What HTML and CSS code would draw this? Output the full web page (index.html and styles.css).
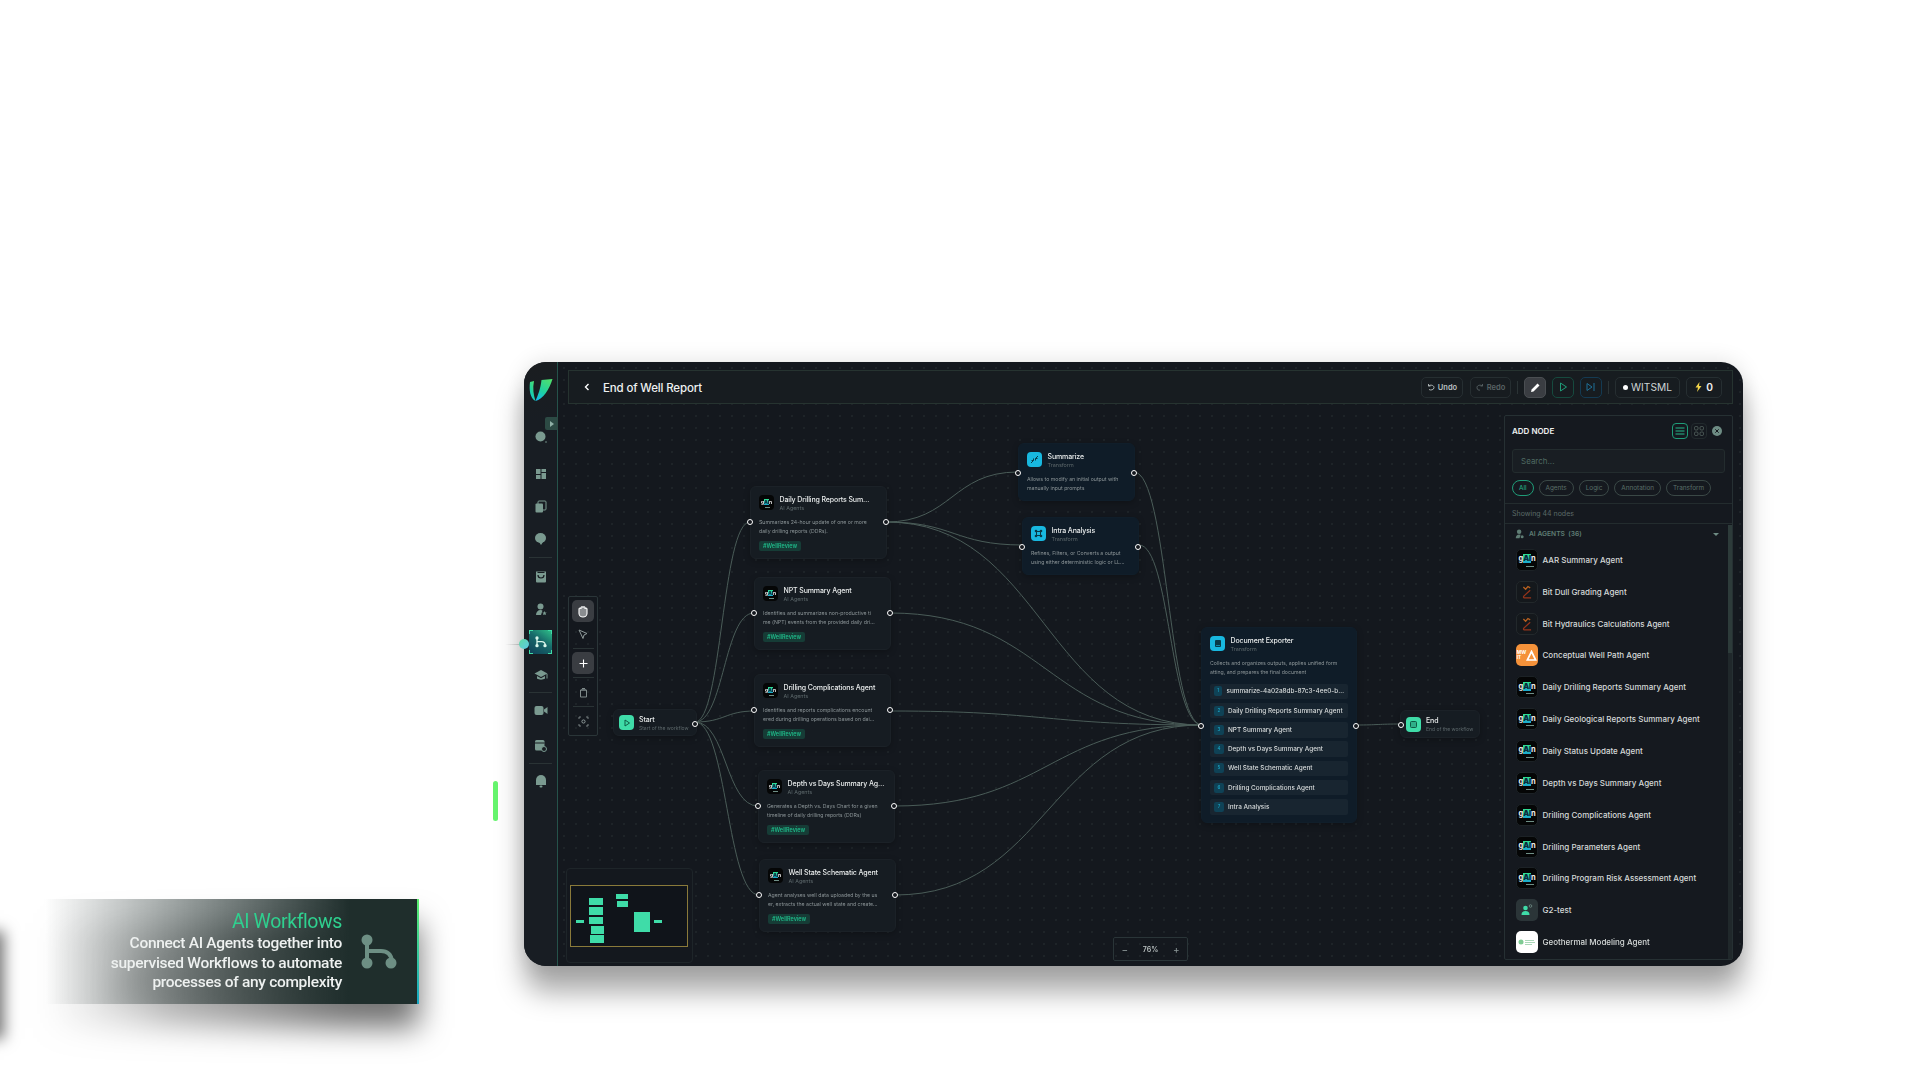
FILE: index.html
```html
<!DOCTYPE html>
<html lang="en">
<head>
  <meta charset="UTF-8" />
  <title>End of Well Report</title>
  <link rel="stylesheet" href="styles.css">
</head>
<body>
  <svg class="defs" width="0" height="0">
    <symbol id="bit" viewBox="0 0 22 22">
      <path d="M7 5.500l2.500 2.500L12 5l2.500 1.500" fill="none" stroke="#b8601f" stroke-width="1.400"/>
      <path d="M14.500 9l-7 6.500c-1 1.500 0 2 1.500 2h6.500" fill="none" stroke="#96341a" stroke-width="1.400"/>
    </symbol>
  </svg>

  <div class="ghost"></div>
  <div class="pulse-bar"></div>
  <div class="pulse-line"></div>

  <div class="callout">
    <div class="callout-text">
      <div class="callout-title">AI Workflows</div>
      <div>Connect AI Agents together into</div>
      <div>supervised Workflows to automate</div>
      <div>processes of any complexity</div>
    </div>
    <svg class="callout-icon" width="36" height="36" viewBox="0 0 36 36">
      <path d="M6 6v24M6 17h14c6 0 10 3 11 10" fill="none" stroke="#6d8f84" stroke-width="4"/>
      <circle cx="6" cy="6" r="5.500" fill="#6d8f84"/><circle cx="6" cy="29" r="5.500" fill="#6d8f84"/><circle cx="30" cy="29" r="5.500" fill="#6d8f84"/>
    </svg>
  </div>

  <div class="window">
    <aside class="sidebar">
      <svg class="logo" width="24" height="26" viewBox="0 0 24 26">
        <defs><linearGradient id="lg" x1="0.8" y1="0" x2="0.25" y2="1"><stop offset="0" stop-color="#4fe06e"/><stop offset="0.6" stop-color="#1fd0a0"/><stop offset="1" stop-color="#14bce8"/></linearGradient></defs>
        <path d="M12.500 3L23.500 2C20.500 12 14 22.500 6.500 24 9 18 11.500 12 12.500 3z" fill="url(#lg)"/>
        <path d="M1 5C0 13 1 21 6.500 24 4.500 18 3.500 11 5 4z" fill="url(#lg)"/>
      </svg>
      <div class="toggle"><span></span></div>
      <nav class="nav">
        <a class="nav-item first"><svg width="14" height="14" viewBox="0 0 14 14"><circle cx="6.500" cy="6.500" r="5" fill="#7a9a90"/><circle cx="12" cy="12" r="0.800" fill="#7a9a90"/></svg></a>
        <a class="nav-item"><svg width="12" height="12" viewBox="0 0 12 12" fill="#7a9a90"><rect x="1" y="1" width="4.500" height="5"/><rect x="6.500" y="1" width="4.500" height="3"/><rect x="1" y="7" width="4.500" height="4"/><rect x="6.500" y="5" width="4.500" height="6"/></svg></a>
        <a class="nav-item"><svg width="13" height="13" viewBox="0 0 13 13"><rect x="4" y="1" width="8" height="9" rx="1" fill="none" stroke="#7a9a90"/><rect x="1.500" y="3.500" width="7.500" height="9" rx="1" fill="#7a9a90"/></svg></a>
        <a class="nav-item"><svg width="13" height="13" viewBox="0 0 13 13" fill="#7a9a90"><ellipse cx="6.500" cy="6" rx="5.500" ry="5"/><path d="M5 10l2 3 2-3z"/></svg></a>
        <div class="nav-sep wide"></div>
        <a class="nav-item"><svg width="12" height="13" viewBox="0 0 12 13"><path d="M1 1.500h10v10a1 1 0 0 1-1 1H2a1 1 0 0 1-1-1z" fill="#7a9a90"/><path d="M3 5c0 4 6 4 6 0" fill="none" stroke="#171c21" stroke-width="1.200"/><rect x="2.500" y="2" width="7" height="1" fill="#171c21"/></svg></a>
        <a class="nav-item"><svg width="12" height="13" viewBox="0 0 12 13" fill="#7a9a90"><circle cx="5.500" cy="3.500" r="3"/><path d="M1 12c0-3 2-5 4.500-5 1 0 1.500.3 2 .6L6 12z"/><path d="M9.500 8l.7 1.400 1.500.2-1.100 1 .3 1.500-1.400-.7-1.400.7.300-1.500-1.100-1 1.500-.2z"/></svg></a>
        <a class="nav-item active">
          <i class="tick tl"></i><i class="tick tr"></i><i class="tick bl"></i><i class="tick br"></i>
          <svg width="12" height="12" viewBox="0 0 36 36"><path d="M6 6v24M6 17h14c6 0 10 3 11 10" fill="none" stroke="#d8f5ea" stroke-width="4"/><circle cx="6" cy="6" r="5" fill="#d8f5ea"/><circle cx="6" cy="29" r="5" fill="#d8f5ea"/><circle cx="30" cy="29" r="5" fill="#d8f5ea"/></svg>
        </a>
        <a class="nav-item"><svg width="14" height="12" viewBox="0 0 14 12" fill="#7a9a90"><path d="M7 1L0.500 4.500 7 8l6.500-3.500z"/><path d="M3 7v2.500c2 1.500 6 1.500 8 0V7L7 9.200z"/><rect x="12.500" y="5" width="1" height="4.500"/></svg></a>
        <div class="nav-sep"></div>
        <a class="nav-item"><svg width="14" height="11" viewBox="0 0 14 11" fill="#7a9a90"><rect x="0.500" y="1" width="9" height="9" rx="2"/><path d="M10 4.500L13.500 2v7L10 6.500z"/></svg></a>
        <a class="nav-item spaced"><svg width="13" height="13" viewBox="0 0 13 13"><rect x="1" y="1" width="9.500" height="10.500" rx="1.500" fill="#7a9a90"/><rect x="1" y="3.500" width="9.500" height="1" fill="#171c21"/><circle cx="10" cy="10" r="2.500" fill="#171c21" stroke="#7a9a90"/></svg></a>
        <div class="nav-sep"></div>
        <a class="nav-item"><svg width="12" height="14" viewBox="0 0 12 14" fill="#7a9a90"><path d="M1 11V6a5 5 0 0 1 10 0v5z"/><rect x="4.500" y="11.500" width="3" height="2" rx="1"/></svg></a>
      </nav>
    </aside>

    <div class="main">
      <header class="topbar">
        <div class="topbar-left">
          <svg width="6" height="8" viewBox="0 0 6 8"><path d="M4.500 1L1.500 4l3 3" fill="none" stroke="#fff" stroke-width="1.400"/></svg>
          <span class="page-title">End of Well Report</span>
        </div>
        <div class="topbar-right">
          <button class="tb-btn undo"><svg width="8" height="8" viewBox="0 0 8 8"><path d="M1.500 1v2h2M1.700 3C3 1.500 7 2 7 4.500S3.500 7.500 2 6.500" fill="none" stroke="#b9c0c0" stroke-width="0.900"/></svg>Undo</button>
          <button class="tb-btn redo"><svg width="8" height="8" viewBox="0 0 8 8"><path d="M6.500 1v2h-2M6.300 3C5 1.500 1 2 1 4.500S3 7.500 4 7" fill="none" stroke="#5a6466" stroke-width="0.900"/></svg>Redo</button>
          <i class="tb-sep"></i>
          <button class="tb-icon pen"><svg width="11" height="11" viewBox="0 0 11 11"><path d="M1 10l.6-2.500L7.500 1.600l2 2L3.500 9.400z" fill="#fff"/></svg></button>
          <button class="tb-icon play"><svg width="9" height="10" viewBox="0 0 9 10"><path d="M1.500 1l6 4-6 4z" fill="none" stroke="#1f9c78" stroke-width="1"/></svg></button>
          <button class="tb-icon step"><svg width="10" height="10" viewBox="0 0 10 10"><path d="M1 1.500l5 3.500-5 3.500zM8 1v8" fill="none" stroke="#1f6f96" stroke-width="1"/></svg></button>
          <i class="tb-sep"></i>
          <div class="tb-pill witsml"><i class="dot"></i>WITSML</div>
          <div class="tb-pill bolt"><svg width="7" height="10" viewBox="0 0 7 10"><path d="M4.500 0L0.500 5.500h2.500L2 10l4.500-6H4z" fill="#f2d44a"/></svg>0</div>
        </div>
      </header>

      <section class="canvas">
        <svg class="edges" width="1186" height="562" viewBox="0 0 1186 562" fill="none">
          <path d="M137 318C164 318 164 118 192 118"/>
          <path d="M137 318C166 318 166 209 196 209"/>
          <path d="M137 318C167 318 167 307 197 307"/>
          <path d="M137 318C168 318 168 402 200 402"/>
          <path d="M137 318C169 318 169 491 201 491"/>
          <path d="M328 118C394 118 394 68 460 68"/>
          <path d="M328 118C396 118 396 141 465 141"/>
          <path d="M328 118C486 118 486 321 644 321"/>
          <path d="M576 68C610 68 610 321 644 321"/>
          <path d="M581 141C612 141 612 321 644 321"/>
          <path d="M332 209C488 209 488 321 644 321"/>
          <path d="M333 307C488 307 488 321 644 321"/>
          <path d="M336 402C490 402 490 321 644 321"/>
          <path d="M337 491C490 491 490 321 644 321"/>
          <path d="M798 321C820 321 820 320 843 320"/>
        </svg>

        <div class="tools">
          <button class="tool on"><svg width="12" height="13" viewBox="0 0 12 13"><path d="M2 6V4a1 1 0 0 1 2 0V3a1 1 0 0 1 2-.5 1 1 0 0 1 2 .5v1a1 1 0 0 1 2 0v4.500c0 2-2 3.500-4 3.500S2 10.500 2 8.500z" fill="#8a8d90" stroke="#fff" stroke-width="1.100"/></svg></button>
          <button class="tool"><svg width="10" height="11" viewBox="0 0 10 11"><path d="M1 1l8 3.500-3 1.500-1 3.500z" fill="none" stroke="#8f9a9a"/></svg></button>
          <i class="tool-sep"></i>
          <button class="tool on"><svg width="9" height="9" viewBox="0 0 9 9"><path d="M4.500 0.500v8M0.500 4.500h8" stroke="#fff" stroke-width="1.100"/></svg></button>
          <i class="tool-sep"></i>
          <button class="tool"><svg width="9" height="11" viewBox="0 0 9 11"><path d="M1.500 3h6v7h-6zM3 1.500h3M2 3h5" fill="none" stroke="#7f8a8a"/></svg></button>
          <i class="tool-sep"></i>
          <button class="tool"><svg width="11" height="11" viewBox="0 0 11 11"><path d="M1 3V1h2M8 1h2v2M10 8v2H8M3 10H1V8" fill="none" stroke="#8f9a9a" stroke-width="0.800"/><circle cx="5.500" cy="5.500" r="1.600" fill="none" stroke="#8f9a9a"/></svg></button>
        </div>

        <div class="minimap">
          <svg width="118" height="62" viewBox="570 885 118 62" fill="#3fdca8">
            <rect x="570.500" y="885.500" width="117" height="61" fill="#10141a" stroke="#8a7a3a"/>
            <rect x="576" y="920" width="8" height="3"/>
            <rect x="589" y="898" width="14" height="7"/>
            <rect x="589" y="907" width="14" height="8"/>
            <rect x="589" y="917" width="14" height="7"/>
            <rect x="591" y="926" width="13" height="8"/>
            <rect x="590" y="935" width="14" height="8"/>
            <rect x="616" y="894" width="12" height="5"/>
            <rect x="617" y="901" width="11" height="6"/>
            <rect x="634" y="912" width="16" height="20"/>
            <rect x="654" y="920" width="8" height="3"/>
          </svg>
        </div>

        <div class="node small n-start">
          <span class="ico green"><svg width="8" height="8" viewBox="0 0 8 8"><path d="M2 1l4.500 3L2 7z" fill="none" stroke="#0f5a44"/></svg></span>
          <div class="label"><div class="title">Start</div><div class="sub">Start of the workflow</div></div>
          <i class="port out"></i>
        </div>

        <div class="node agent n-daily">
          <i class="port in"></i><i class="port out"></i>
          <div class="head"><span class="gain sm">g<b>AI</b>n</span><div class="label"><div class="title">Daily Drilling Reports Sum…</div><div class="sub">AI Agents</div></div></div>
          <p class="desc">Summarizes 24-hour update of one or more<br>daily drilling reports (DDRs).</p>
          <span class="tag">#WellReview</span>
        </div>
        <div class="node agent n-npt">
          <i class="port in"></i><i class="port out"></i>
          <div class="head"><span class="gain sm">g<b>AI</b>n</span><div class="label"><div class="title">NPT Summary Agent</div><div class="sub">AI Agents</div></div></div>
          <p class="desc">Identifies and summarizes non-productive ti<br>me (NPT) events from the provided daily dri…</p>
          <span class="tag">#WellReview</span>
        </div>
        <div class="node agent n-comp">
          <i class="port in"></i><i class="port out"></i>
          <div class="head"><span class="gain sm">g<b>AI</b>n</span><div class="label"><div class="title">Drilling Complications Agent</div><div class="sub">AI Agents</div></div></div>
          <p class="desc">Identifies and reports complications encount<br>ered during drilling operations based on dai…</p>
          <span class="tag">#WellReview</span>
        </div>
        <div class="node agent n-depth">
          <i class="port in"></i><i class="port out"></i>
          <div class="head"><span class="gain sm">g<b>AI</b>n</span><div class="label"><div class="title">Depth vs Days Summary Ag…</div><div class="sub">AI Agents</div></div></div>
          <p class="desc">Generates a Depth vs. Days Chart for a given<br>timeline of daily drilling reports (DDRs)</p>
          <span class="tag">#WellReview</span>
        </div>
        <div class="node agent n-well">
          <i class="port in"></i><i class="port out"></i>
          <div class="head"><span class="gain sm">g<b>AI</b>n</span><div class="label"><div class="title">Well State Schematic Agent</div><div class="sub">AI Agents</div></div></div>
          <p class="desc">Agent analyses well data uploaded by the us<br>er, extracts the actual well state and create…</p>
          <span class="tag">#WellReview</span>
        </div>

        <div class="node transform n-summ">
          <i class="port in"></i><i class="port out"></i>
          <div class="head"><span class="ico cyan"><svg width="9" height="9" viewBox="0 0 9 9"><path d="M1 8l2.500-2.500M8 1L5.500 3.500M3.500 3.500v2h-2M5.500 5.500v-2h2" fill="none" stroke="#083a48"/></svg></span><div class="label"><div class="title">Summarize</div><div class="sub">Transform</div></div></div>
          <p class="desc">Allows to modify an initial output with<br>manually input prompts</p>
        </div>
        <div class="node transform n-intra">
          <i class="port in"></i><i class="port out"></i>
          <div class="head"><span class="ico cyan"><svg width="9" height="9" viewBox="0 0 9 9" fill="#083a48"><path d="M2.500 2.500h4v4h-4z" fill="none" stroke="#083a48"/><circle cx="2" cy="2" r="1.300"/><circle cx="7" cy="2" r="1.300"/><circle cx="2" cy="7" r="1.300"/><circle cx="7" cy="7" r="1.300"/></svg></span><div class="label"><div class="title">Intra Analysis</div><div class="sub">Transform</div></div></div>
          <p class="desc">Refines, Filters, or Converts a output<br>using either deterministic logic or LL…</p>
        </div>

        <div class="node transform n-doc">
          <i class="port in"></i><i class="port out"></i>
          <div class="head"><span class="ico cyan"><svg width="8" height="9" viewBox="0 0 8 9"><rect x="1" y="1" width="6" height="7" rx="1" fill="#083a48"/><path d="M2 6.500h4" stroke="#18b8e0" stroke-width="0.600"/></svg></span><div class="label"><div class="title">Document Exporter</div><div class="sub">Transform</div></div></div>
          <p class="desc">Collects and organizes outputs, applies unified form<br>atting, and prepares the final document</p>
          <ol class="doc-list">
            <li><i>1</i>summarize-4a02a8db-87c3-4ee0-b…</li>
            <li><i>2</i>Daily Drilling Reports Summary Agent</li>
            <li><i>3</i>NPT Summary Agent</li>
            <li><i>4</i>Depth vs Days Summary Agent</li>
            <li><i>5</i>Well State Schematic Agent</li>
            <li><i>6</i>Drilling Complications Agent</li>
            <li><i>7</i>Intra Analysis</li>
          </ol>
        </div>

        <div class="node small n-end">
          <i class="port in"></i>
          <span class="ico green"><svg width="9" height="9" viewBox="0 0 9 9"><rect x="1.500" y="1.500" width="6" height="6" rx="1" fill="#2fae88" stroke="#0f5a44"/></svg></span>
          <div class="label"><div class="title">End</div><div class="sub">End of the workflow</div></div>
        </div>

        <div class="zoom-ctl"><span>−</span><b>76%</b><span>+</span></div>

        <aside class="panel">
          <div class="panel-head">
            <strong>ADD NODE</strong>
            <div class="panel-btns">
              <span class="view on"><svg width="10" height="8" viewBox="0 0 10 8"><path d="M0.500 1h9M0.500 4h9M0.500 7h9" stroke="#26b98c"/></svg></span>
              <span class="view"><svg width="10" height="10" viewBox="0 0 10 10" fill="none" stroke="#53625f" stroke-width="0.900"><rect x="0.500" y="0.500" width="3.500" height="3.500" rx="1.200"/><rect x="6" y="0.500" width="3.500" height="3.500" rx="1.200"/><rect x="0.500" y="6" width="3.500" height="3.500" rx="1.200"/><rect x="6" y="6" width="3.500" height="3.500" rx="1.200"/></svg></span>
              <svg class="close" width="10" height="10" viewBox="0 0 10 10"><circle cx="5" cy="5" r="5" fill="#6e8c84"/><path d="M3.300 3.300l3.400 3.400M6.700 3.300L3.300 6.700" stroke="#14181e" stroke-width="1"/></svg>
            </div>
          </div>
          <div class="search">Search...</div>
          <div class="chips">
            <span class="chip on">All</span><span class="chip">Agents</span><span class="chip">Logic</span><span class="chip">Annotation</span><span class="chip">Transform</span>
          </div>
          <div class="showing">Showing 44 nodes</div>
          <div class="section">
            <svg width="9" height="10" viewBox="0 0 12 13" fill="#5f7d74"><circle cx="5.500" cy="3.500" r="3"/><path d="M1 12c0-3 2-5 4.500-5 1 0 1.500.3 2 .6L6 12z"/><circle cx="9.500" cy="10" r="2"/></svg>
            <span>AI AGENTS&nbsp; (36)</span>
            <i class="caret"></i>
          </div>
          <ul class="node-list">
            <li><span class="gain">g<b>AI</b>n</span>AAR Summary Agent</li>
            <li><span class="thumb dark"><svg width="22" height="22"><use href="#bit"/></svg></span>Bit Dull Grading Agent</li>
            <li><span class="thumb dark"><svg width="22" height="22"><use href="#bit"/></svg></span>Bit Hydraulics Calculations Agent</li>
            <li><span class="thumb orange"><em>MW<br>IT</em><svg width="11" height="11" viewBox="0 0 11 11"><path d="M5.500 1.500l4.200 8.500H1.300z" fill="none" stroke="#fff" stroke-width="1.700"/></svg></span>Conceptual Well Path Agent</li>
            <li><span class="gain">g<b>AI</b>n</span>Daily Drilling Reports Summary Agent</li>
            <li><span class="gain">g<b>AI</b>n</span>Daily Geological Reports Summary Agent</li>
            <li><span class="gain">g<b>AI</b>n</span>Daily Status Update Agent</li>
            <li><span class="gain">g<b>AI</b>n</span>Depth vs Days Summary Agent</li>
            <li><span class="gain">g<b>AI</b>n</span>Drilling Complications Agent</li>
            <li><span class="gain">g<b>AI</b>n</span>Drilling Parameters Agent</li>
            <li><span class="gain">g<b>AI</b>n</span>Drilling Program Risk Assessment Agent</li>
            <li><span class="thumb slate"><svg width="12" height="12" viewBox="0 0 12 12"><circle cx="4.500" cy="4" r="2.300" fill="#3fdca8"/><path d="M0.500 11c0-3 1.500-4 4-4s4 1 4 4z" fill="#3fdca8"/><circle cx="9.500" cy="2" r="1.300" fill="none" stroke="#7a9a90" stroke-width="0.700"/></svg></span>G2-test</li>
            <li><span class="thumb white"><svg width="18" height="8" viewBox="0 0 18 8"><circle cx="3" cy="4" r="2.500" fill="#7ecb93"/><path d="M7 2.500h9M7 4.500h10M7 6.500h7" stroke="#a9d8b8"/></svg></span>Geothermal Modeling Agent</li>
          </ul>
          <div class="scroll"></div>
        </aside>
      </section>
    </div>
    <i class="pulse-dot"></i>
  </div>
</body>
</html>
```

FILE: styles.css
```css
* {
  box-sizing: border-box;
}
html, body {
  margin: 0;
  height: 100%;
}
body {
  position: relative;
  width: 1920px;
  height: 1080px;
  overflow: hidden;
  background: #fff;
  font-family: Inter, "Noto Sans", sans-serif;
}
.defs {
  position: absolute;
}
button {
  font-family: inherit;
  padding: 0;
  background: none;
  border: none;
}

/* floating bits around the window */
.ghost {
  position: absolute;
  left: -60px;
  top: 935px;
  width: 60px;
  height: 100px;
  box-shadow: 0 0 14px 4px rgba(0,0,0,0.55);
}
.pulse-bar {
  position: absolute;
  left: 493px;
  top: 781px;
  width: 5px;
  height: 40px;
  border-radius: 3px;
  background: #66f56e;
}
.pulse-line {
  position: absolute;
  left: 505px;
  top: 644px;
  width: 16px;
  height: 1px;
  background: linear-gradient(to right, rgba(200,200,200,0), #ccc);
}
.callout {
  position: absolute;
  left: 40px;
  top: 899px;
  width: 379px;
  height: 105px;
  display: flex;
  justify-content: flex-end;
  align-items: center;
  padding-right: 20px;
  gap: 19px;
  border-right: 2px solid;
  border-image: linear-gradient(to bottom, #5cf06c, #14a5c5) 1;
  background: linear-gradient(to right, rgba(31,46,44,0) 1%, rgba(31,46,44,1) 82%);
  filter: drop-shadow(0 24px 15px rgba(0,0,0,0.55)) blur(0.3px);
  color: #eef1f0;
}
.callout-text {
  font-family: Roboto, sans-serif;
  font-size: 15.500px;
  font-weight: 500;
  letter-spacing: -0.3px;
  line-height: 19.500px;
  text-align: right;
}
.callout-title {
  font-size: 19.500px;
  font-weight: 400;
  letter-spacing: -0.4px;
  line-height: 24px;
  color: #2fd08f;
}

/* app window */
.window {
  position: absolute;
  left: 524px;
  top: 362px;
  width: 1219px;
  height: 604px;
  display: flex;
  border-radius: 22px;
  background: #14181e;
  box-shadow: 0 26px 28px rgba(0,0,0,0.34), 0 0 22px rgba(0,0,0,0.12);
  filter: blur(0.3px);
}
.pulse-dot {
  position: absolute;
  left: -5px;
  top: 277px;
  width: 10px;
  height: 10px;
  border-radius: 50%;
  background: linear-gradient(135deg, #5fd8a0, #5cc8e8);
}
.sidebar {
  position: relative;
  flex: 0 0 34px;
  display: flex;
  flex-direction: column;
  align-items: center;
  border-right: 1px solid #25524a;
  border-radius: 22px 0 0 22px;
  background: linear-gradient(to bottom, #1a1d20 0, #181d23 60px);
}
.logo {
  margin-top: 15px;
}
.toggle {
  position: absolute;
  right: -1px;
  top: 55px;
  width: 13px;
  height: 13px;
  display: flex;
  align-items: center;
  justify-content: center;
  border-radius: 2px 0 0 2px;
  background: #2c4a44;
}
.toggle span {
  border-left: 4px solid #8fb0a6;
  border-top: 3px solid transparent;
  border-bottom: 3px solid transparent;
}
.nav {
  display: flex;
  flex-direction: column;
  align-items: center;
  margin-top: 18px;
  width: 100%;
}
.nav-item {
  position: relative;
  width: 23px;
  height: 32.500px;
  display: flex;
  align-items: center;
  justify-content: center;
}
.nav-item.first {
  margin-bottom: 4px;
}
.nav-item.spaced {
  margin-top: 2.500px;
}
.nav-item.active {
  height: 24px;
  margin: 4.500px 0;
  background: linear-gradient(215deg, #2fc28a 0%, #176a6a 45%, #103f58 100%);
}
.tick {
  position: absolute;
  width: 4px;
  height: 4px;
  border: 1px solid #3fdca8;
}
.tl { left: 0; top: 0; border-right: none; border-bottom: none; }
.tr { right: 0; top: 0; border-left: none; border-bottom: none; }
.bl { left: 0; bottom: 0; border-right: none; border-top: none; }
.br { right: 0; bottom: 0; border-left: none; border-top: none; }
.nav-sep {
  width: 23px;
  height: 1px;
  margin: 1px 0;
  background: #2a3335;
}
.nav-sep.wide {
  margin: 2.250px 0;
}

.main {
  flex: 1;
  min-width: 0;
  display: flex;
  flex-direction: column;
  padding-top: 8px;
  border-radius: 0 22px 22px 0;
  background-image: radial-gradient(#1f2429 0.7px, transparent 0.8px);
  background-size: 12px 12px;
}
.topbar {
  height: 34px;
  margin: 0 10px;
  padding: 0 10px 0 15px;
  display: flex;
  align-items: center;
  justify-content: space-between;
  border: 1px solid #263330;
  background: #171c20;
}
.topbar-left {
  display: flex;
  align-items: center;
  gap: 13px;
}
.page-title {
  padding-top: 1px;
  color: #eef1f1;
  font-size: 11.500px;
  font-weight: 500;
  letter-spacing: -0.15px;
}
.topbar-right {
  display: flex;
  align-items: center;
  gap: 6px;
  color: #c9d0d0;
}
.tb-btn {
  width: 42px;
  height: 21px;
  display: flex;
  align-items: center;
  justify-content: center;
  gap: 3px;
  border: 1px solid #262e31;
  border-radius: 5px;
  font-size: 7.500px;
  font-weight: 600;
  color: #b9c0c0;
}
.tb-btn.redo {
  width: 41px;
  color: #5a6466;
  margin-left: 1px;
}
.tb-sep {
  width: 1px;
  height: 13px;
  background: #2a3335;
}
.tb-icon {
  width: 22px;
  height: 21px;
  display: flex;
  align-items: center;
  justify-content: center;
  border: 1px solid #262e31;
  border-radius: 5px;
}
.tb-icon.pen { background: #3a3d42; border-color: #4a4e52; }
.tb-icon.play { border-color: #164a3e; }
.tb-icon.step { border-color: #143a52; }
.tb-pill {
  height: 21px;
  display: flex;
  align-items: center;
  justify-content: center;
  gap: 3px;
  border: 1px solid #262e31;
  border-radius: 5px;
  font-size: 10.200px;
  color: #cfd5d5;
}
.tb-pill.witsml { width: 65px; }
.tb-pill.bolt { width: 36px; gap: 4px; font-weight: 600; color: #eee; }
.dot {
  width: 5px;
  height: 5px;
  border-radius: 50%;
  background: #fff;
}

/* workflow canvas: nodes sit on a free canvas */
.canvas {
  position: relative;
  flex: 1;
}
.edges {
  position: absolute;
  left: 0;
  top: 0;
}
.edges path {
  stroke: #4a5c58;
  stroke-width: 1;
}
.tools {
  position: absolute;
  left: 10px;
  top: 192px;
  width: 30px;
  height: 140px;
  padding: 3px 0;
  display: flex;
  flex-direction: column;
  align-items: center;
  border: 1px solid #2a3538;
  border-radius: 2px;
}
.tool {
  flex: none;
  width: 22px;
  height: 22px;
  margin-bottom: 1px;
  display: flex;
  align-items: center;
  justify-content: center;
  border-radius: 5px;
}
.tool.on {
  background: #3a3d42;
}
.tool-sep {
  flex: none;
  width: 21px;
  height: 1px;
  margin: 2px 0 3px;
  background: #2a3335;
}
.minimap {
  position: absolute;
  left: 8px;
  top: 464px;
  width: 127px;
  height: 95px;
  padding: 16px 3px 0;
  border: 1px solid #1e2529;
  border-radius: 4px;
  background: #14181e;
}

.node {
  position: absolute;
  border: 1px solid #1b2127;
  border-radius: 6px;
  background: #161c22;
  box-shadow: 0 2px 6px rgba(0,0,0,0.25);
  color: #e8ebeb;
}
.node.agent {
  width: 137px;
  height: 73px;
  padding: 8px 8px;
}
.node.transform {
  padding: 8px 8px;
  background: #0f1c28;
  border-color: #101e2a;
}
.node.small {
  padding: 0 5px;
  display: flex;
  align-items: center;
  gap: 5px;
}
.node.small .sub {
  font-size: 5px;
}
.n-daily { left: 192px; top: 82px; }
.n-npt { left: 196px; top: 173px; }
.n-comp { left: 196px; top: 270px; }
.n-depth { left: 200px; top: 366px; }
.n-well { left: 201px; top: 455px; }
.n-summ { left: 460px; top: 39px; width: 117px; height: 58px; }
.n-intra { left: 464px; top: 113px; width: 117px; height: 58px; }
.n-doc { left: 643px; top: 223px; width: 156px; height: 196px; }
.n-start { left: 55px; top: 305px; width: 84px; height: 27px; }
.n-end { left: 842px; top: 306px; width: 80px; height: 28px; }

.head {
  display: flex;
  align-items: center;
  gap: 5.500px;
  height: 15px;
}
.label {
  padding-top: 1px;
}
.title {
  font-size: 7px;
  font-weight: 500;
  line-height: 9px;
  white-space: nowrap;
  letter-spacing: -0.12px;
}
.sub {
  font-size: 5.400px;
  line-height: 8px;
  color: #5d686b;
  white-space: nowrap;
}
.desc {
  margin: 7.500px 0 0;
  font-size: 5.200px;
  line-height: 9.700px;
  color: #8b9497;
  white-space: nowrap;
}
.tag {
  display: block;
  width: fit-content;
  margin-top: 4px;
  padding: 0 4px;
  height: 10px;
  line-height: 10px;
  border-radius: 2px;
  background: #163c36;
  color: #1fb888;
  font-size: 5.500px;
  font-weight: 600;
}
.ico {
  flex: none;
  width: 15px;
  height: 15px;
  display: flex;
  align-items: center;
  justify-content: center;
  border-radius: 4px;
}
.ico.green { background: #3fdca8; }
.ico.cyan { background: #18b8e0; }
.port {
  position: absolute;
  top: 31.500px;
  width: 6px;
  height: 6px;
  border: 1.400px solid #fff;
  border-radius: 50%;
  background: #14181e;
}
.port.in { left: -4px; }
.port.out { right: -3px; }
.n-summ .port, .n-intra .port { top: 25.500px; }
.n-doc .port { top: 94.500px; }
.n-start .port { top: 10.500px; right: -2px; }
.n-end .port { top: 10.500px; left: -3px; }

.gain {
  position: relative;
  flex: none;
  width: 22px;
  height: 22px;
  padding-bottom: 2px;
  display: flex;
  align-items: center;
  justify-content: center;
  border-radius: 5px;
  background: #050606;
  border: 1px solid #1c2226;
  color: #f0f0f0;
  font-size: 7.500px;
  font-weight: 700;
  letter-spacing: -0.2px;
}
.gain b {
  color: #0c2b3c;
  background: linear-gradient(#2fe08f, #1aa8d0);
}
.gain::after {
  content: "";
  position: absolute;
  left: 9px;
  bottom: 3px;
  width: 8px;
  height: 1px;
  background: #6f8f86;
}
.gain.sm {
  width: 15px;
  height: 15px;
  border: none;
  border-radius: 4px;
  font-size: 5px;
}
.gain.sm::after {
  left: 6px;
  bottom: 2px;
  width: 5px;
}
.doc-list {
  margin: 5.600px 0 0;
  padding: 0;
  list-style: none;
  display: flex;
  flex-direction: column;
  gap: 3.800px;
}
.doc-list li {
  height: 15.500px;
  display: flex;
  align-items: center;
  gap: 4px;
  padding: 0 4px;
  border-radius: 2px;
  background: #182530;
  font-size: 6.400px;
  font-weight: 500;
  color: #d8dcdc;
  white-space: nowrap;
}
.doc-list i {
  width: 10px;
  height: 10px;
  border-radius: 2px;
  background: #0f4256;
  color: #1aa5c5;
  font-size: 4.500px;
  font-style: normal;
  line-height: 10px;
  text-align: center;
}
.zoom-ctl {
  position: absolute;
  left: 555px;
  top: 533px;
  width: 75px;
  height: 24px;
  display: flex;
  align-items: center;
  justify-content: space-around;
  border: 1px solid #2a3538;
  border-radius: 2px;
  color: #8f9a9a;
  font-size: 10px;
}
.zoom-ctl b {
  font-size: 7px;
  font-weight: 600;
  color: #b9c0c0;
}

/* add node panel */
.panel {
  position: absolute;
  left: 946px;
  top: 11px;
  width: 229px;
  height: 545px;
  overflow: hidden;
  border: 1px solid #263033;
  border-radius: 2px;
  background: #15191f;
}
.panel-head {
  height: 16px;
  margin: 7px 7px 0;
  display: flex;
  align-items: center;
  justify-content: space-between;
}
.panel-head strong {
  color: #eef1f1;
  font-size: 8px;
  font-weight: 600;
}
.panel-btns {
  display: flex;
  align-items: center;
  gap: 3px;
  padding-right: 3px;
}
.view {
  width: 16px;
  height: 16px;
  display: flex;
  align-items: center;
  justify-content: center;
  border: 1px solid #222a2d;
  border-radius: 4px;
}
.view.on {
  border-color: #1f9c78;
}
.close {
  margin-left: 2px;
}
.search {
  height: 24px;
  margin: 10px 7px 0;
  padding-left: 8px;
  line-height: 22px;
  border: 1px solid #232c2e;
  border-radius: 3px;
  background: #191e23;
  color: #4f6a62;
  font-size: 8px;
}
.chips {
  margin: 7px;
  height: 16px;
  display: flex;
  gap: 5px;
}
.chip {
  height: 16px;
  padding: 0 6px;
  line-height: 14px;
  border: 1px solid #3a4846;
  border-radius: 8px;
  color: #5b6f69;
  font-size: 6.400px;
  font-weight: 400;
}
.chip.on {
  border-color: #1f9c78;
  color: #26b98c;
}
.showing {
  height: 21px;
  padding-left: 7px;
  line-height: 20px;
  border-top: 1px solid #232c2e;
  border-bottom: 1px solid #232c2e;
  color: #5b6a68;
  font-size: 7px;
}
.section {
  height: 20px;
  padding: 0 13px 0 10px;
  display: flex;
  align-items: center;
  gap: 5px;
  color: #5f7d74;
  font-size: 6.700px;
  font-weight: 600;
}
.caret {
  margin-left: auto;
  border-top: 3px solid #6e8c84;
  border-left: 3px solid transparent;
  border-right: 3px solid transparent;
}
.node-list {
  margin: 0;
  padding: 0 0 0 11px;
  list-style: none;
}
.node-list li {
  height: 31.850px;
  display: flex;
  align-items: center;
  gap: 4.500px;
  color: #d6dad9;
  font-size: 8px;
  font-weight: 500;
  white-space: nowrap;
}
.thumb {
  flex: none;
  width: 22px;
  height: 22px;
  display: flex;
  align-items: center;
  justify-content: center;
  border-radius: 5px;
}
.thumb.dark { background: #14181c; border: 1px solid #22282b; }
.thumb.slate { background: #2b3538; }
.thumb.white { background: #fff; }
.thumb.orange {
  background: #f5923a;
  color: #fff;
}
.thumb.orange em {
  font-size: 4.800px;
  line-height: 5px;
  font-style: normal;
  font-weight: 700;
}
.scroll {
  position: absolute;
  right: 0;
  top: 109px;
  bottom: 0;
  width: 4px;
  background: linear-gradient(to bottom, #2d3b3a 0, #2d3b3a 128px, #20282b 128px);
}
```
